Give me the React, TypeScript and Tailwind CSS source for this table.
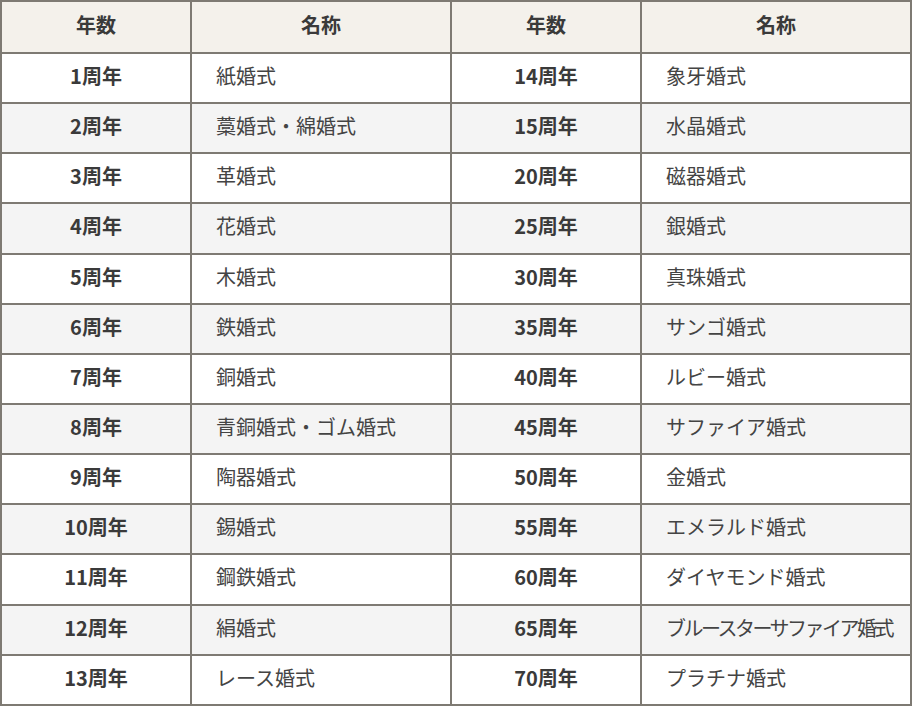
import React from "react";

const left: [string, string][] = [
  ["1周年", "紙婚式"],
  ["2周年", "藁婚式・綿婚式"],
  ["3周年", "革婚式"],
  ["4周年", "花婚式"],
  ["5周年", "木婚式"],
  ["6周年", "鉄婚式"],
  ["7周年", "銅婚式"],
  ["8周年", "青銅婚式・ゴム婚式"],
  ["9周年", "陶器婚式"],
  ["10周年", "錫婚式"],
  ["11周年", "鋼鉄婚式"],
  ["12周年", "絹婚式"],
  ["13周年", "レース婚式"],
];

const right: [string, string][] = [
  ["14周年", "象牙婚式"],
  ["15周年", "水晶婚式"],
  ["20周年", "磁器婚式"],
  ["25周年", "銀婚式"],
  ["30周年", "真珠婚式"],
  ["35周年", "サンゴ婚式"],
  ["40周年", "ルビー婚式"],
  ["45周年", "サファイア婚式"],
  ["50周年", "金婚式"],
  ["55周年", "エメラルド婚式"],
  ["60周年", "ダイヤモンド婚式"],
  ["65周年", "ブルースターサファイア婚式"],
  ["70周年", "プラチナ婚式"],
];

export default function App() {
  return (
    <div
      className="w-[912px] bg-white"
      style={{ fontFamily: '"Noto Sans CJK JP", "Noto Sans", sans-serif' }}
    >
      <div className="grid grid-cols-[188px_258px_188px_268px] gap-[2px] bg-[#7e7a73] p-[2px] text-[20px] leading-none">
        <div className="flex h-[50px] items-center justify-center bg-[#f4f1eb] pb-[4px] font-bold text-[#3a3a3a]">年数</div>
        <div className="flex h-[50px] items-center justify-center bg-[#f4f1eb] pb-[4px] font-bold text-[#3a3a3a]">名称</div>
        <div className="flex h-[50px] items-center justify-center bg-[#f4f1eb] pb-[4px] font-bold text-[#3a3a3a]">年数</div>
        <div className="flex h-[50px] items-center justify-center bg-[#f4f1eb] pb-[4px] font-bold text-[#3a3a3a]">名称</div>
        {left.map((l, i) => {
          const r = right[i];
          const bg = i % 2 === 1 ? "bg-[#f4f4f4]" : "bg-white";
          return (
            <React.Fragment key={i}>
              <div className={`flex h-[48.15px] items-center justify-center pb-[4px] font-bold text-[#3a3a3a] ${bg}`}>{l[0]}</div>
              <div className={`flex h-[48.15px] items-center whitespace-nowrap pb-[4px] pl-6 text-[#444] ${bg}`}>{l[1]}</div>
              <div className={`flex h-[48.15px] items-center justify-center pb-[4px] font-bold text-[#3a3a3a] ${bg}`}>{r[0]}</div>
              <div
                className={`flex h-[48.15px] items-center whitespace-nowrap pb-[4px] pl-6 text-[#444] ${bg} ${
                  r[1].length > 10 ? "tracking-[-2.5px]" : ""
                }`}
              >
                {r[1]}
              </div>
            </React.Fragment>
          );
        })}
      </div>
    </div>
  );
}
